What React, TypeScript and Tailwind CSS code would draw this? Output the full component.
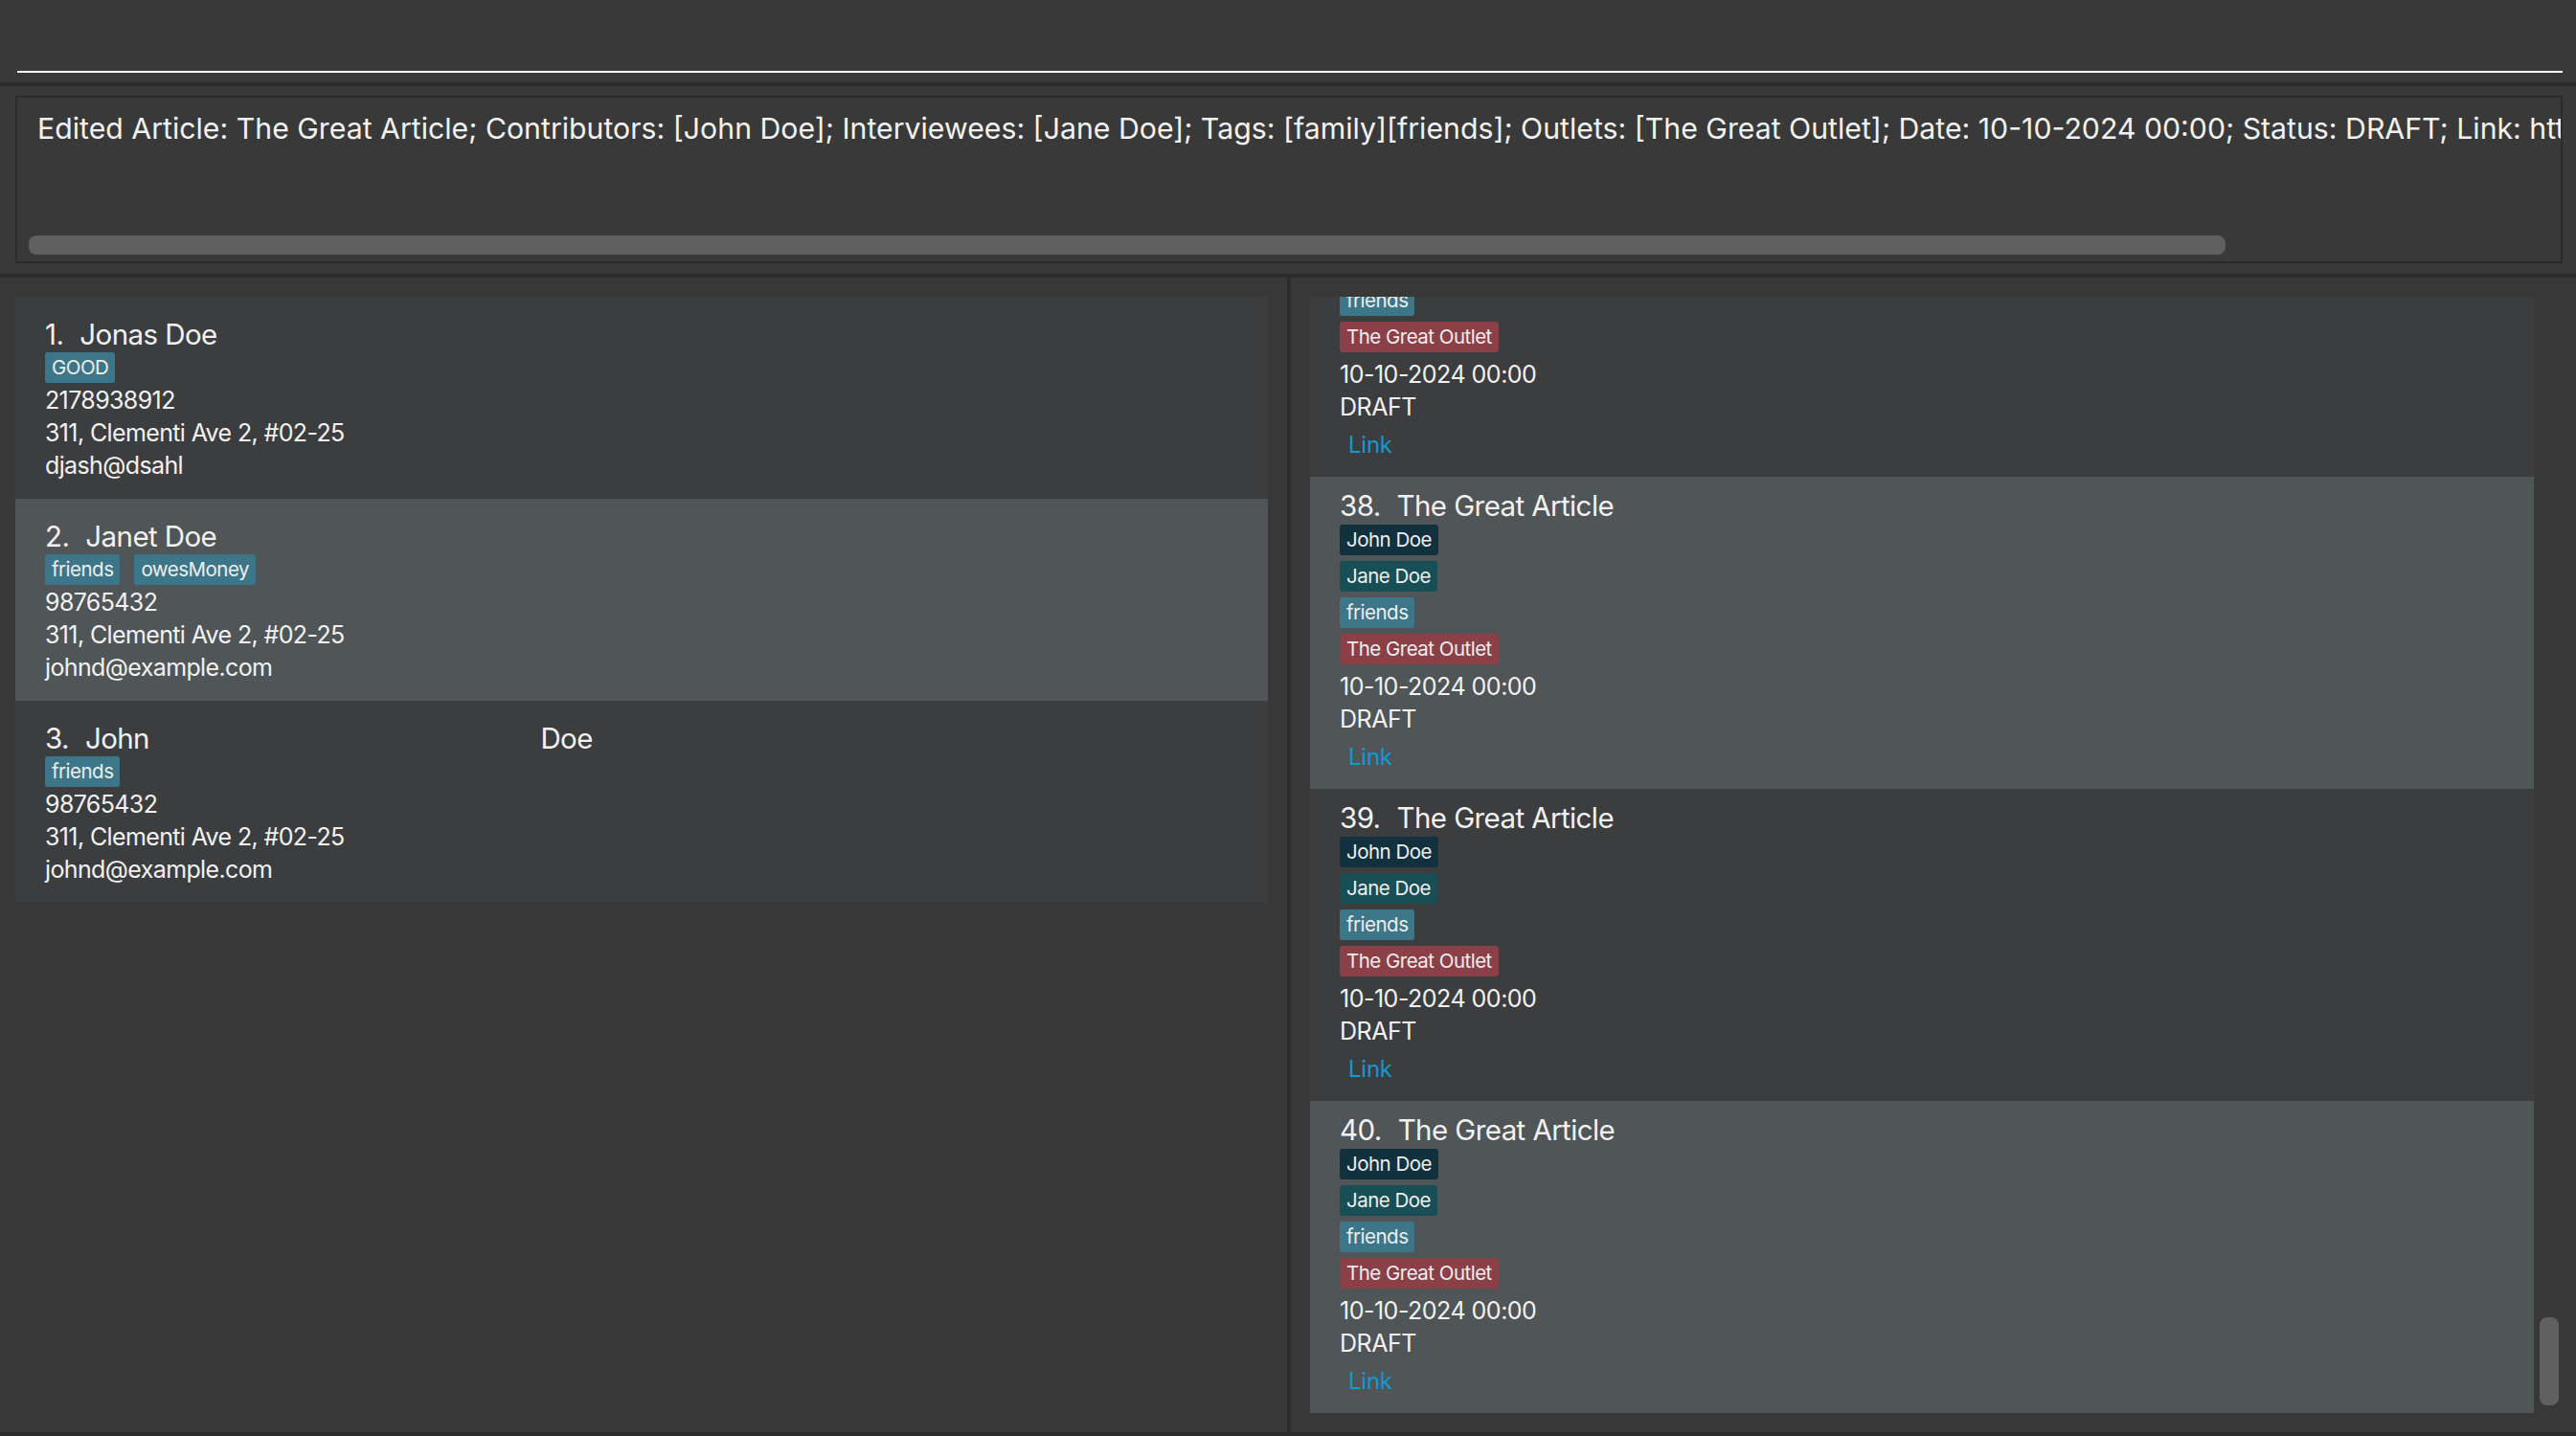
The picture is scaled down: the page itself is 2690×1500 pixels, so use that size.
import React from 'react';

// people + articles shown in the two lists
const persons = [
    { name: 'Jonas Doe', tags: ['GOOD'], phone: '2178938912', address: '311, Clementi Ave 2, #02-25', email: 'djash@dsahl' },
    { name: 'Janet Doe', tags: ['friends', 'owesMoney'], phone: '98765432', address: '311, Clementi Ave 2, #02-25', email: 'johnd@example.com' },
    { name: 'John' + ' '.repeat(53) + 'Doe', tags: ['friends'], phone: '98765432', address: '311, Clementi Ave 2, #02-25', email: 'johnd@example.com' },
];

const articles = [37, 38, 39, 40].map((id) => ({
    id,
    title: 'The Great Article',
    contributor: 'John Doe',
    interviewee: 'Jane Doe',
    tag: 'friends',
    outlet: 'The Great Outlet',
    date: '10-10-2024 00:00',
    status: 'DRAFT',
}));

const resultText =
    'Edited Article: The Great Article; Contributors: [John Doe]; Interviewees: [Jane Doe]; Tags: [family][friends]; Outlets: [The Great Outlet]; Date: 10-10-2024 00:00; Status: DRAFT; Link: https://example.com/the-great-article';

const Tag = ({ label, color }: { label: string; color: string }) => (
    <span className={`inline-flex h-[32px] items-center rounded-[3px] px-[7px] text-[20.5px] tracking-[-0.025em] text-[#eeeeee] ${color}`}>{label}</span>
);

const PersonCard = ({ p, index }: { p: any; index: number }) => (
    <div className={`flex flex-col pl-[31px] pt-[21px] pb-[18px] ${index % 2 === 0 ? 'bg-[#3c3d3f]' : 'bg-[#505558]'}`}>
        <div className="flex h-[36px] items-center gap-[17px] text-[29.5px] leading-[36px] tracking-[-0.02em] text-[#f2f2f2]">
            <span>{index + 1}.</span>
            <span className="whitespace-pre">{p.name}</span>
        </div>
        <div className="mt-[1px] flex gap-[15px]">
            {p.tags.map((t: string) => (
                <Tag key={t} label={t} color="bg-[#3d7689]" />
            ))}
        </div>
        <div className="mt-[1px] text-[25px] leading-[34px] tracking-[-0.025em] text-[#f2f2f2]">
            <p>{p.phone}</p>
            <p>{p.address}</p>
            <p>{p.email}</p>
        </div>
    </div>
);

const ArticleCard = ({ a }: { a: any }) => (
    <div className={`flex h-[326px] flex-col pl-[31px] pt-[12px] ${a.id % 2 === 1 ? 'bg-[#3c3d3f]' : 'bg-[#505558]'}`}>
        <div className="flex h-[36px] items-center gap-[17px] text-[29.5px] leading-[36px] tracking-[-0.02em] text-[#f2f2f2]">
            <span>{a.id}.</span>
            <span>{a.title}</span>
        </div>
        <div className="mt-[2px] flex flex-col items-start gap-[6px]">
            <Tag label={a.contributor} color="bg-[#12313f]" />
            <Tag label={a.interviewee} color="bg-[#184f56]" />
            <Tag label={a.tag} color="bg-[#3d7689]" />
            <Tag label={a.outlet} color="bg-[#8b3f47]" />
        </div>
        <div className="mt-[6px] text-[25px] leading-[34px] tracking-[-0.02em] text-[#f2f2f2]">
            <p>{a.date}</p>
            <p>{a.status}</p>
        </div>
        <p className="mt-[6px] pl-[9px] text-[24px] leading-[34px] tracking-[-0.01em] text-[#1698d0]">Link</p>
    </div>
);

const App = () => {
    return (
        <div className="flex h-[1500px] w-[2690px] flex-col overflow-hidden bg-[#383838] font-['Inter','Noto_Sans',sans-serif]">
            {/* command box */}
            <div className="h-[86px] bg-[#393939] pl-[18px] pr-[14px] pt-[10px]">
                <div className="h-[66px] border-b-2 border-white"></div>
            </div>
            <div className="h-[4px] bg-[#2b2b2b]"></div>

            {/* result display */}
            <div className="h-[196px] bg-[#393939] pl-[16px] pr-[14px] pt-[10px] pb-[11px]">
                <div className="flex h-full flex-col overflow-hidden border-2 border-[#2c2c2c]">
                    <p className="whitespace-nowrap pl-[21px] pt-[12px] text-[30.25px] leading-[40px] text-[#f2f2f2]">{resultText}</p>
                    <div className="mt-auto mb-[7px] ml-[12px] h-[20px] w-[2294px] shrink-0 rounded-[8px] bg-[#606060]"></div>
                </div>
            </div>
            <div className="h-[4px] bg-[#2b2b2b]"></div>

            {/* lists */}
            <div className="flex flex-1 min-h-0">
                <div className="w-[1344px] pl-[16px] pr-[20px] pt-[20px]">
                    {persons.map((p, i) => (
                        <PersonCard key={i} p={p} index={i} />
                    ))}
                </div>
                <div className="w-[4px] bg-[#2b2b2b]"></div>
                <div className="flex flex-1 pl-[20px] pt-[20px]">
                    <div className="h-[1166px] w-[1278px] overflow-hidden">
                        <div className="-mt-[138px]">
                            {articles.map((a) => (
                                <ArticleCard key={a.id} a={a} />
                            ))}
                        </div>
                    </div>
                    <div className="ml-[6px] flex h-[1166px] w-[20px] flex-col justify-end">
                        <div className="mb-[8px] h-[92px] rounded-[8px] bg-[#606060]"></div>
                    </div>
                </div>
            </div>
            <div className="h-[4px] bg-[#2b2b2b]"></div>
        </div>
    );
};

export default App;
